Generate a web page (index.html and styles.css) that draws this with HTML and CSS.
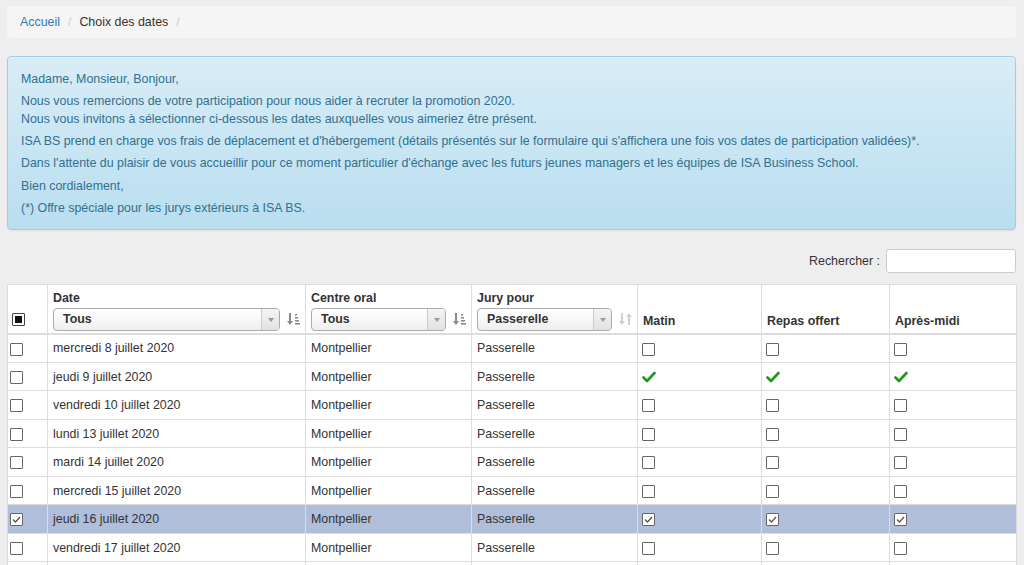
FILE: index.html
```html
<!DOCTYPE html>
<html lang="fr">
<head>
<meta charset="utf-8">
<title>Choix des dates</title>
<link rel="stylesheet" href="styles.css">
</head>
<body>
<div class="page">
  <ol class="breadcrumb">
    <li><a href="#">Accueil</a></li>
    <li class="sep">/</li>
    <li class="active">Choix des dates</li>
    <li class="sep">/</li>
  </ol>

  <div class="alert">
    <p>Madame, Monsieur, Bonjour,</p>
    <p>Nous vous remercions de votre participation pour nous aider à recruter la promotion 2020.<br>Nous vous invitons à sélectionner ci-dessous les dates auxquelles vous aimeriez être présent.</p>
    <p>ISA BS prend en charge vos frais de déplacement et d'hébergement (détails présentés sur le formulaire qui s'affichera une fois vos dates de participation validées)*.</p>
    <p>Dans l'attente du plaisir de vous accueillir pour ce moment particulier d'échange avec les futurs jeunes managers et les équipes de ISA Business School.</p>
    <p>Bien cordialement,</p>
    <p>(*) Offre spéciale pour les jurys extérieurs à ISA BS.</p>
  </div>

  <div class="search">
    <label>Rechercher :</label>
    <input type="text" class="search-input">
  </div>

  <table class="grid">
    <colgroup>
      <col class="c-sel"><col class="c-date"><col class="c-centre"><col class="c-jury"><col class="c-matin"><col class="c-repas"><col class="c-apm">
    </colgroup>
    <thead>
      <tr>
        <th class="th-sel"><span class="cb cb-ind"><span class="cb-dot"></span></span></th>
        <th>
          <div class="th-label">Date</div>
          <div class="filter">
            <div class="select"><span class="select-val">Tous</span><span class="select-arrow"><span class="tri"></span></span></div>
            <svg class="sort" width="13" height="14" viewBox="0 0 13 14"><path d="M2 1h2v8h2l-3 4-3-4h2z" fill="#8a8a8a"/><rect x="8" y="2" width="2" height="1.6" fill="#8a8a8a"/><rect x="8" y="5" width="3" height="1.6" fill="#8a8a8a"/><rect x="8" y="8" width="4" height="1.6" fill="#8a8a8a"/><rect x="8" y="11" width="5" height="1.6" fill="#8a8a8a"/></svg>
          </div>
        </th>
        <th>
          <div class="th-label">Centre oral</div>
          <div class="filter">
            <div class="select"><span class="select-val">Tous</span><span class="select-arrow"><span class="tri"></span></span></div>
            <svg class="sort" width="13" height="14" viewBox="0 0 13 14"><path d="M2 1h2v8h2l-3 4-3-4h2z" fill="#8a8a8a"/><rect x="8" y="2" width="2" height="1.6" fill="#8a8a8a"/><rect x="8" y="5" width="3" height="1.6" fill="#8a8a8a"/><rect x="8" y="8" width="4" height="1.6" fill="#8a8a8a"/><rect x="8" y="11" width="5" height="1.6" fill="#8a8a8a"/></svg>
          </div>
        </th>
        <th>
          <div class="th-label">Jury pour</div>
          <div class="filter">
            <div class="select"><span class="select-val">Passerelle</span><span class="select-arrow"><span class="tri"></span></span></div>
            <svg class="sort" width="13" height="14" viewBox="0 0 13 14"><path d="M2 1h2v8h2l-3 4-3-4h2z" fill="#cfcfcf"/><path d="M9 13h2V5h2l-3-4-3 4h2z" fill="#cfcfcf"/></svg>
          </div>
        </th>
        <th><div class="th-plain">Matin</div></th>
        <th><div class="th-plain">Repas offert</div></th>
        <th><div class="th-plain">Après-midi</div></th>
      </tr>
    </thead>
    <tbody>
      <tr><td class="td-sel"><span class="cb"></span></td><td>mercredi 8 juillet 2020</td><td>Montpellier</td><td>Passerelle</td><td><span class="cb"></span></td><td><span class="cb"></span></td><td><span class="cb"></span></td></tr>
      <tr><td class="td-sel"><span class="cb"></span></td><td>jeudi 9 juillet 2020</td><td>Montpellier</td><td>Passerelle</td>
        <td><svg class="ok" width="14" height="12" viewBox="0 0 14 12"><path d="M1.5 6.5l3.5 3.5 7.5-8" fill="none" stroke="#1f9a1f" stroke-width="2.6" stroke-linecap="round" stroke-linejoin="round"/></svg></td>
        <td><svg class="ok" width="14" height="12" viewBox="0 0 14 12"><path d="M1.5 6.5l3.5 3.5 7.5-8" fill="none" stroke="#1f9a1f" stroke-width="2.6" stroke-linecap="round" stroke-linejoin="round"/></svg></td>
        <td><svg class="ok" width="14" height="12" viewBox="0 0 14 12"><path d="M1.5 6.5l3.5 3.5 7.5-8" fill="none" stroke="#1f9a1f" stroke-width="2.6" stroke-linecap="round" stroke-linejoin="round"/></svg></td></tr>
      <tr><td class="td-sel"><span class="cb"></span></td><td>vendredi 10 juillet 2020</td><td>Montpellier</td><td>Passerelle</td><td><span class="cb"></span></td><td><span class="cb"></span></td><td><span class="cb"></span></td></tr>
      <tr><td class="td-sel"><span class="cb"></span></td><td>lundi 13 juillet 2020</td><td>Montpellier</td><td>Passerelle</td><td><span class="cb"></span></td><td><span class="cb"></span></td><td><span class="cb"></span></td></tr>
      <tr><td class="td-sel"><span class="cb"></span></td><td>mardi 14 juillet 2020</td><td>Montpellier</td><td>Passerelle</td><td><span class="cb"></span></td><td><span class="cb"></span></td><td><span class="cb"></span></td></tr>
      <tr><td class="td-sel"><span class="cb"></span></td><td>mercredi 15 juillet 2020</td><td>Montpellier</td><td>Passerelle</td><td><span class="cb"></span></td><td><span class="cb"></span></td><td><span class="cb"></span></td></tr>
      <tr class="selected"><td class="td-sel"><span class="cb cb-on"><svg width="11" height="11" viewBox="0 0 11 11"><path d="M2 5.5l2.5 2.5 4.5-5" fill="none" stroke="#555" stroke-width="1.3"/></svg></span></td><td>jeudi 16 juillet 2020</td><td>Montpellier</td><td>Passerelle</td>
        <td><span class="cb cb-on"><svg width="11" height="11" viewBox="0 0 11 11"><path d="M2 5.5l2.5 2.5 4.5-5" fill="none" stroke="#555" stroke-width="1.3"/></svg></span></td>
        <td><span class="cb cb-on"><svg width="11" height="11" viewBox="0 0 11 11"><path d="M2 5.5l2.5 2.5 4.5-5" fill="none" stroke="#555" stroke-width="1.3"/></svg></span></td>
        <td><span class="cb cb-on"><svg width="11" height="11" viewBox="0 0 11 11"><path d="M2 5.5l2.5 2.5 4.5-5" fill="none" stroke="#555" stroke-width="1.3"/></svg></span></td></tr>
      <tr><td class="td-sel"><span class="cb"></span></td><td>vendredi 17 juillet 2020</td><td>Montpellier</td><td>Passerelle</td><td><span class="cb"></span></td><td><span class="cb"></span></td><td><span class="cb"></span></td></tr>
      <tr class="row-empty"><td class="td-sel"></td><td></td><td></td><td></td><td></td><td></td><td></td></tr>
    </tbody>
  </table>
</div>
</body>
</html>
```

FILE: styles.css
```css
* { box-sizing: border-box; }
html, body {
  margin: 0;
  padding: 0;
  background: #eeeeee;
  font-family: "Liberation Sans", Arial, sans-serif;
  font-size: 12.4px;
  color: #333;
}
.page {
  padding: 6px 8px 0 7px;
}
.breadcrumb {
  list-style: none;
  margin: 0 0 18px 0;
  padding: 8px 13px;
  height: 32px;
  line-height: 16px;
  background: #f5f5f5;
  border-radius: 4px;
  display: flex;
}
.breadcrumb a {
  color: #337ab7;
  text-decoration: none;
}
.breadcrumb .sep {
  color: #ccc;
  padding: 0 8px;
}
.alert {
  padding: 14px 13px 12px 13px;
  border: 1px solid #9acfea;
  border-radius: 4px;
  color: #31708f;
  background: linear-gradient(to bottom, #d9edf7 0%, #b9def0 100%);
  box-shadow: inset 0 1px 0 rgba(255,255,255,.25), 0 1px 2px rgba(0,0,0,.05);
  line-height: 17.2px;
}
.alert p {
  margin: 0 0 5.2px 0;
}
.alert p:last-child { margin-bottom: 0; }

.search {
  display: flex;
  justify-content: flex-end;
  align-items: center;
  margin-top: 19px;
  margin-bottom: 11px;
}
.search label {
  margin-right: 6px;
  color: #333;
}
.search-input {
  width: 130px;
  height: 24px;
  border: 1px solid #ccc;
  border-radius: 3px;
  background: #fff;
  padding: 2px 5px;
  font: inherit;
}

.grid {
  width: 1009px;
  border-collapse: collapse;
  table-layout: fixed;
  background: #fff;
  border: 1px solid #ddd;
}
.c-sel { width: 40px; }
.c-date { width: 258px; }
.c-centre { width: 166px; }
.c-jury { width: 166px; }
.c-matin { width: 124px; }
.c-repas { width: 128px; }
.c-apm { width: 127px; }

.grid th {
  height: 49px;
  padding: 4px 5px 2px 5px;
  vertical-align: bottom;
  text-align: left;
  font-weight: bold;
  border-left: 1px solid #ddd;
  border-bottom: 2px solid #ddd;
}
.th-label { line-height: 16px; margin-bottom: 2px; }
.th-plain { line-height: 16px; margin-bottom: 2px; }
.th-sel { text-align: left; }
.th-sel .cb { margin-bottom: 5px; margin-left: -1px; }

.filter {
  display: flex;
  align-items: center;
}
.select {
  flex: 1;
  height: 23px;
  border: 1px solid #aaa;
  border-radius: 4px;
  background: linear-gradient(to bottom, #ffffff 0%, #f6f6f6 60%, #eeeeee 100%);
  display: flex;
  align-items: center;
  overflow: hidden;
}
.select-val {
  flex: 1;
  padding-left: 9px;
  font-weight: bold;
  color: #333;
  line-height: 21px;
}
.select-arrow {
  width: 18px;
  height: 100%;
  border-left: 1px solid #ccc;
  background: linear-gradient(to bottom, #f4f4f4, #e2e2e2);
  display: flex;
  align-items: center;
  justify-content: center;
}
.tri {
  width: 0;
  height: 0;
  border-left: 3px solid transparent;
  border-right: 3px solid transparent;
  border-top: 4px solid #999;
  margin-top: 2px;
}
.sort {
  margin-left: 7px;
  flex: none;
}

.grid td {
  height: 28.5px;
  padding: 0 5px;
  vertical-align: middle;
  border-left: 1px solid #ddd;
  border-bottom: 1px solid #ddd;
  line-height: 16px;
  white-space: nowrap;
}
.grid td.td-sel { padding-left: 3px; }
.grid tr.selected td { background: #b0bed9; }

.cb {
  display: inline-block;
  width: 13px;
  height: 13px;
  border: 1px solid #666;
  border-radius: 1px;
  background: #fff;
  vertical-align: middle;
  position: relative;
  margin-left: -1px;
}
.cb svg { display: block; margin: 0; }
.cb-ind {
  border-color: #444;
  padding: 2px;
}
.cb-dot {
  display: block;
  width: 7px;
  height: 7px;
  background: #111;
}
.ok {
  display: block;
  margin-left: -1px;
}
```
